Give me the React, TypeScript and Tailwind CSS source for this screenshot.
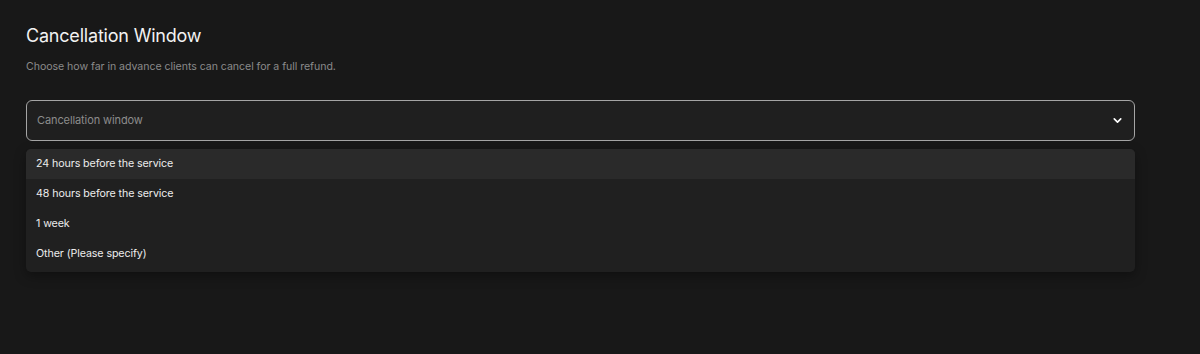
import React from 'react';
import { ChevronDown } from 'lucide-react';

const options = [
  '24 hours before the service',
  '48 hours before the service',
  '1 week',
  'Other (Please specify)',
];

const App = () => {
  return (
    <main className="h-[354px] w-full bg-[#181818] px-[26px] pt-[25px] font-['Inter',sans-serif] overflow-hidden">
      <div className="w-[1109px]">
        <h2 className="text-[18px] leading-[22px] text-[#f2f2f2] tracking-[-0.2px]">Cancellation Window</h2>
        <p className="mt-[13px] text-[10.6px] leading-[14px] text-[#8a8a8a] tracking-[-0.05px]">
          Choose how far in advance clients can cancel for a full refund.
        </p>

        {/* Select trigger */}
        <div className="mt-[26px] h-[41px] rounded-[6px] border border-[#a5a5a5] bg-[#1f1f1f] flex items-center justify-between pl-[10px] pr-[10px]">
          <span className="text-[11px] text-[#8c8c8c] tracking-[-0.1px]">Cancellation window</span>
          <ChevronDown className="w-[13px] h-[13px] text-white" strokeWidth={3} />
        </div>

        {/* Dropdown */}
        <div className="mt-[8px] rounded-[5px] bg-[#202020] overflow-hidden shadow-[0_4px_12px_rgba(0,0,0,0.35)]">
          {options.map((opt, i) => (
            <div
              key={opt}
              className={`h-[30px] flex items-center pl-[10px] text-[10.7px] tracking-[-0.1px] text-[#ececec] ${i === 0 ? 'bg-[#2a2a2a]' : ''}`}
            >
              {opt}
            </div>
          ))}
          <div className="h-[3px]" />
        </div>
      </div>
    </main>
  );
};

export default App;
